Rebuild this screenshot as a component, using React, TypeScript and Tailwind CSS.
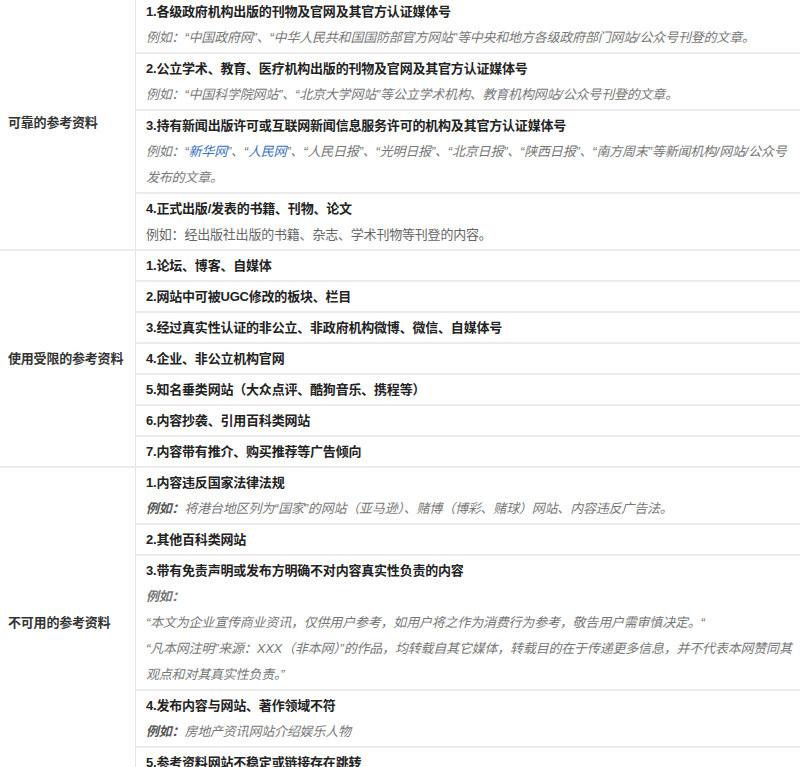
const B = ({ children }: { children: React.ReactNode }) => <div className="font-bold text-[#222]">{children}</div>;
const E = ({ children, className = "" }: { children: React.ReactNode; className?: string }) => (
  <div className={`italic text-[#777] ${className}`}>{children}</div>
);
const Link = ({ children }: { children: React.ReactNode }) => <span className="text-[#3a6fc4]">{children}</span>;

type Group = { label: string; rows: React.ReactNode[] };

const groups: Group[] = [
  {
    label: "可靠的参考资料",
    rows: [
      <>
        <B>1.各级政府机构出版的刊物及官网及其官方认证媒体号</B>
        <E>例如：“中国政府网”、“中华人民共和国国防部官方网站”等中央和地方各级政府部门网站/公众号刊登的文章。</E>
      </>,
      <>
        <B>2.公立学术、教育、医疗机构出版的刊物及官网及其官方认证媒体号</B>
        <E>例如：“中国科学院网站”、“北京大学网站”等公立学术机构、教育机构网站/公众号刊登的文章。</E>
      </>,
      <>
        <B>3.持有新闻出版许可或互联网新闻信息服务许可的机构及其官方认证媒体号</B>
        <E>
          例如：“<Link>新华网</Link>”、“<Link>人民网</Link>”、“人民日报”、“光明日报”、“北京日报”、“陕西日报”、“南方周末”等新闻机构/网站/公众号发布的文章。
        </E>
      </>,
      <>
        <B>4.正式出版/发表的书籍、刊物、论文</B>
        <div className="text-[#666]">例如：经出版社出版的书籍、杂志、学术刊物等刊登的内容。</div>
      </>,
    ],
  },
  {
    label: "使用受限的参考资料",
    rows: [
      <B>1.论坛、博客、自媒体</B>,
      <B>2.网站中可被UGC修改的板块、栏目</B>,
      <B>3.经过真实性认证的非公立、非政府机构微博、微信、自媒体号</B>,
      <B>4.企业、非公立机构官网</B>,
      <B>5.知名垂类网站（大众点评、酷狗音乐、携程等）</B>,
      <B>6.内容抄袭、引用百科类网站</B>,
      <B>7.内容带有推介、购买推荐等广告倾向</B>,
    ],
  },
  {
    label: "不可用的参考资料",
    rows: [
      <>
        <B>1.内容违反国家法律法规</B>
        <E>
          <span className="font-bold text-[#555]">例如：</span>将港台地区列为“国家”的网站（亚马逊）、赌博（博彩、赌球）网站、内容违反广告法。
        </E>
      </>,
      <B>2.其他百科类网站</B>,
      <>
        <B>3.带有免责声明或发布方明确不对内容真实性负责的内容</B>
        <E className="font-bold text-[#555]">例如：</E>
        <E>“本文为企业宣传商业资讯，仅供用户参考，如用户将之作为消费行为参考，敬告用户需审慎决定。“</E>
        <E>“凡本网注明”来源：XXX（非本网）”的作品，均转载自其它媒体，转载目的在于传递更多信息，并不代表本网赞同其观点和对其真实性负责。”</E>
      </>,
      <>
        <B>4.发布内容与网站、著作领域不符</B>
        <E>
          <span className="font-bold text-[#555]">例如：</span>房地产资讯网站介绍娱乐人物
        </E>
      </>,
      <B>5.参考资料网站不稳定或链接存在跳转</B>,
    ],
  },
];

export default function App() {
  return (
    <div
      className="w-[800px] h-[767px] overflow-hidden bg-white text-[13px] leading-[26px] tracking-[-0.2px]"
      style={{ fontFamily: '"Liberation Sans", "Noto Sans CJK SC", sans-serif' }}
    >
      <div className="-mt-[3px]">
        {groups.map((g) => (
          <div key={g.label} className="flex border-b-2 border-[#ebebeb]">
            <div className="w-[136px] shrink-0 flex items-center pl-2 border-r border-[#e3e3e3] font-semibold text-[#333]">
              {g.label}
            </div>
            <div className="flex-1">
              {g.rows.map((r, i) => (
                <div
                  key={i}
                  className={`pl-[10px] pr-2 pt-[2px] pb-[1px] ${i > 0 ? "border-t-2 border-[#ebebeb]" : ""}`}
                >
                  {r}
                </div>
              ))}
            </div>
          </div>
        ))}
      </div>
    </div>
  );
}
